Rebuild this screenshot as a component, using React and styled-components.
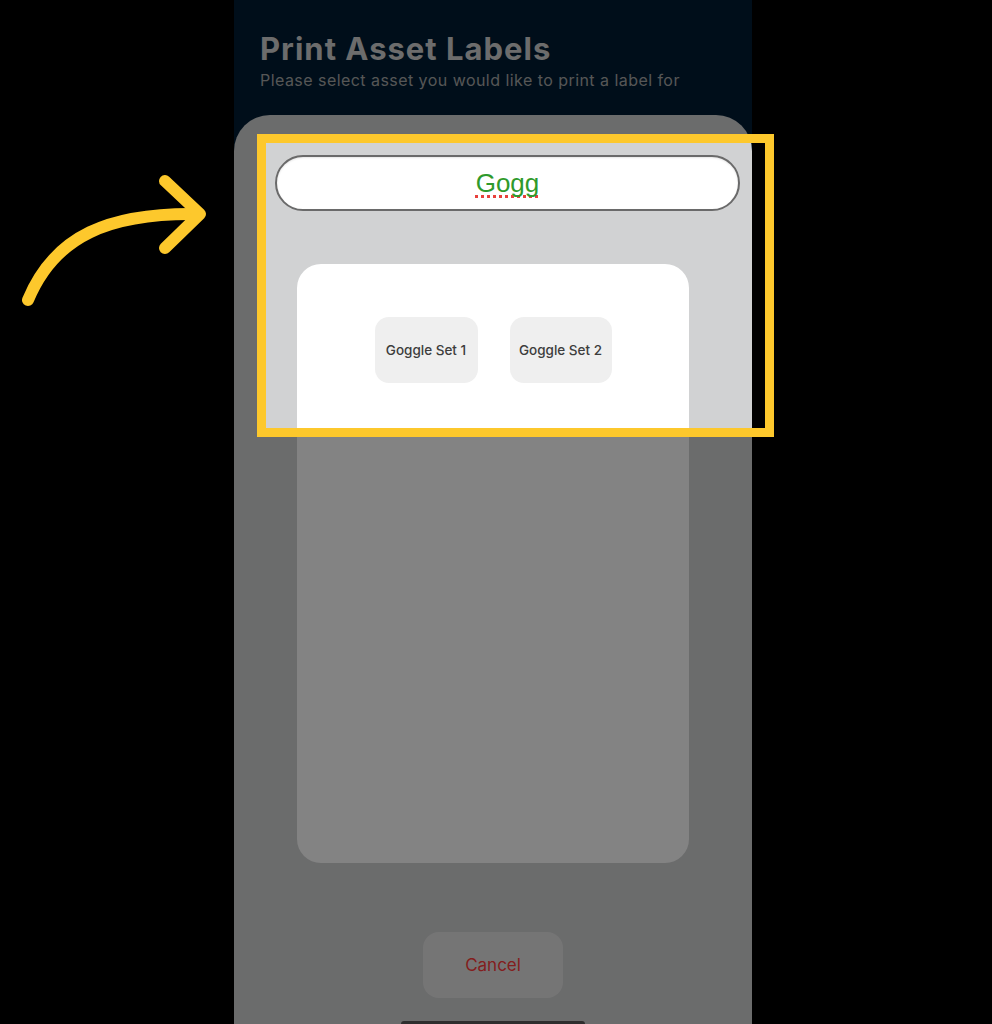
import React from 'react'
import styled, { createGlobalStyle } from 'styled-components'

const GlobalStyle = createGlobalStyle`
  html, body {
    margin: 0;
    padding: 0;
    background: #000;
    font-family: Inter, "Noto Sans", sans-serif;
  }
`

const Stage = styled.div`
  position: relative;
  height: 1024px;
  overflow: hidden;
  background: #000;
  display: flex;
`

const Phone = styled.div`
  margin-left: 234px;
  width: 518px;
  display: flex;
  flex-direction: column;
  background: #001d34;
`

const Header = styled.header`
  flex-shrink: 0;
  height: 115px;
  box-sizing: border-box;
  padding: 31px 26px 0;
`

const Title = styled.h1`
  margin: 0;
  font-size: 31px;
  font-weight: 700;
  line-height: 36px;
  color: #d2d2d2;
  letter-spacing: 1px;
`

const Subtitle = styled.p`
  margin: 3px 0 0;
  font-size: 16px;
  line-height: 20px;
  letter-spacing: 0.45px;
  color: #a8a8a8;
`

const Sheet = styled.main`
  flex: 1;
  min-height: 0;
  background: #d1d2d3;
  border-radius: 36px 36px 0 0;
  padding-top: 40px;
  display: flex;
  flex-direction: column;
`

const Search = styled.div`
  flex-shrink: 0;
  margin: 0 12px 0 41px;
  height: 56px;
  box-sizing: border-box;
  border: 2px solid #6a6a6a;
  border-radius: 28px;
  background: #fff;
  display: flex;
  align-items: center;
  justify-content: center;
  box-shadow: inset 0 1px 2px rgba(0, 0, 0, 0.1);
`

const Query = styled.span`
  font-family: "Liberation Sans", Arial, sans-serif;
  font-size: 26px;
  color: #2f9a2c;
  text-decoration: underline dotted #e8413c;
  text-decoration-thickness: 2.5px;
  text-decoration-skip-ink: none;
  text-underline-offset: 3px;
`

const Card = styled.section`
  flex-shrink: 0;
  margin: 53px 63px 0;
  height: 599px;
  box-sizing: border-box;
  background: #fff;
  border-radius: 24px;
  padding-top: 53px;
  display: flex;
  justify-content: center;
  align-items: flex-start;
  gap: 32px;
`

const AssetButton = styled.button`
  width: ${(p) => p.$w}px;
  height: 66px;
  border: none;
  border-radius: 14px;
  background: #efefef;
  font-family: Inter, sans-serif;
  font-size: 13.5px;
  font-weight: 500;
  color: #3d3d3d;
  padding: 0;
`

const CancelButton = styled.button`
  flex-shrink: 0;
  align-self: center;
  margin-top: 69px;
  width: 140px;
  height: 66px;
  border: none;
  border-radius: 16px;
  background: #e4e4e4;
  font-family: Inter, sans-serif;
  font-size: 17px;
  color: #ff3b3b;
`

const HomeBar = styled.div`
  flex-shrink: 0;
  align-self: center;
  margin-top: 23px;
  width: 184px;
  height: 6px;
  border-radius: 3px;
  background: #5a5a5a;
`

const Spotlight = styled.div`
  position: absolute;
  left: 257px;
  top: 134px;
  width: 517px;
  height: 303px;
  box-sizing: border-box;
  border: 9px solid #fdc82c;
  box-shadow: 0 0 0 2000px rgba(0, 0, 0, 0.485);
  pointer-events: none;
`

const Pointer = styled.svg`
  position: absolute;
  left: 0;
  top: 160px;
  z-index: 2;
`

export default function App() {
  return (
    <Stage>
      <GlobalStyle />
      <Phone>
        <Header>
          <Title>Print Asset Labels</Title>
          <Subtitle>Please select asset you would like to print a label for</Subtitle>
        </Header>
        <Sheet>
          <Search>
            <Query>Gogg</Query>
          </Search>
          <Card>
            <AssetButton $w={103}>Goggle Set 1</AssetButton>
            <AssetButton $w={102}>Goggle Set 2</AssetButton>
          </Card>
          <CancelButton>Cancel</CancelButton>
          <HomeBar />
        </Sheet>
      </Phone>
      <Spotlight />
      <Pointer width="240" height="160" viewBox="0 160 240 160">
        <g fill="none" stroke="#fdc82c" strokeWidth="12" strokeLinecap="round" strokeLinejoin="round">
          <path d="M28 300 C 55 235, 110 213, 196 214" />
          <path d="M165 181 L200 214 L165 248" />
        </g>
      </Pointer>
    </Stage>
  )
}
